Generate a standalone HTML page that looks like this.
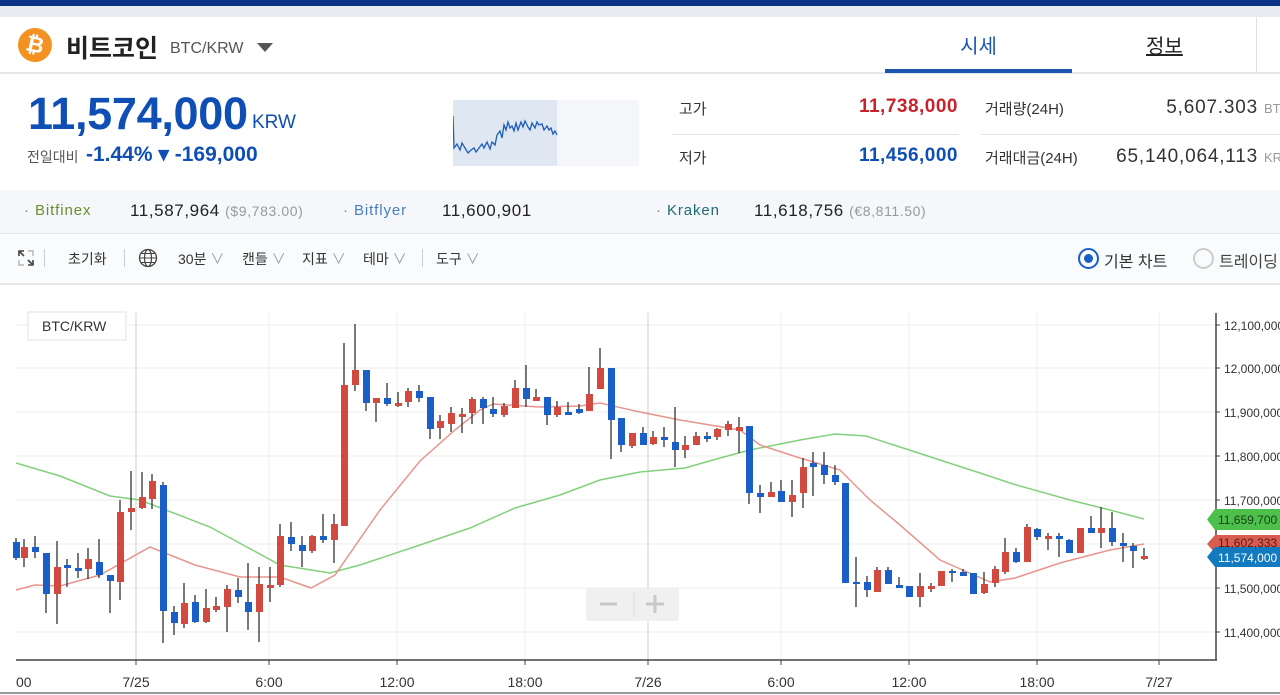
<!DOCTYPE html>
<html><head><meta charset="utf-8"><style>
*{margin:0;padding:0;box-sizing:border-box}
body{width:1280px;height:695px;overflow:hidden;background:#fff;font-family:"Liberation Sans","Noto Sans CJK KR",sans-serif;position:relative;color:#222}
.a{position:absolute;white-space:nowrap}
</style></head><body>
<div class="a" style="left:0;top:0;width:1280px;height:6px;background:#0b3487"></div>
<div class="a" style="left:0;top:6px;width:1280px;height:11px;background:#e8ebf0"></div>
<div class="a" style="left:0;top:72px;width:1280px;height:2px;background:#e4e6ea"></div>
<div class="a" style="left:18px;top:28px;width:34px;height:34px;border-radius:50%;background:#f39222;color:#fff;font-weight:bold;font-size:22px;line-height:34px;text-align:center;transform:rotate(12deg)">₿</div>
<div class="a" style="left:66px;top:29px;font-size:25px;font-weight:bold;color:#222">비트코인</div>
<div class="a" style="left:170px;top:40px;font-size:16px;color:#555">BTC/KRW</div>
<div class="a" style="left:257px;top:43px;width:0;height:0;border-left:8px solid transparent;border-right:8px solid transparent;border-top:9px solid #555"></div>
<div class="a" style="left:885px;top:30px;width:187px;text-align:center;font-size:20px;color:#1a55b0">시세</div>
<div class="a" style="left:885px;top:69px;width:187px;height:4px;background:#1a55b0"></div>
<div class="a" style="left:1146px;top:30px;font-size:20px;color:#222;text-decoration:underline">정보</div>
<div class="a" style="left:1256px;top:17px;width:1px;height:55px;background:#e0e0e0"></div>
<div class="a" style="left:28px;top:88px;font-size:45px;font-weight:bold;color:#0f4fb5;letter-spacing:-0.3px">11,574,000</div>
<div class="a" style="left:252px;top:112px;font-size:19px;color:#0f4fb5">KRW</div>
<div class="a" style="left:27px;top:147px;font-size:14px;color:#555">전일대비</div>
<div class="a" style="left:86px;top:142px;font-size:21px;font-weight:bold;color:#0f4fb5">-1.44% ▾ -169,000</div>
<div class="a" style="left:453px;top:100px;width:186px;height:66px;background:#f4f6fa"></div>
<svg class="a" style="left:453px;top:100px" width="186" height="66"><rect width="104" height="66" fill="#dfe7f3"/><polyline fill="none" stroke="#1d5cb8" stroke-width="1.3" points="0,16 1,48 4,44 7,50 9,43 12,48 15,53 18,50 21,48 23,52 26,48 29,44 31,48 34,42 37,49 39,42 42,45 44,35 47,31 49,38 51,25 53,30 55,22 57,28 59,26 61,31 63,23 65,30 68,22 70,27 72,21 75,27 77,30 79,23 82,28 84,22 86,25 89,24 91,30 94,26 96,30 98,28 100,34 102,31 104,35"/></svg>
<div class="a" style="left:679px;top:98px;font-size:15px;color:#333">고가</div>
<div class="a" style="left:780px;top:96px;width:178px;text-align:right;font-size:19px;font-weight:bold;color:#c8232c;letter-spacing:.5px">11,738,000</div>
<div class="a" style="left:672px;top:134px;width:287px;height:1px;background:#e5e5e5"></div>
<div class="a" style="left:679px;top:147px;font-size:15px;color:#333">저가</div>
<div class="a" style="left:780px;top:145px;width:178px;text-align:right;font-size:19px;font-weight:bold;color:#0f4fb5;letter-spacing:.5px">11,456,000</div>
<div class="a" style="left:985px;top:98px;font-size:15px;color:#333">거래량(24H)</div>
<div class="a" style="left:1100px;top:97px;width:158px;text-align:right;font-size:19px;color:#333;letter-spacing:.8px">5,607.303</div>
<div class="a" style="left:1264px;top:101px;font-size:13px;color:#999">BTC</div>
<div class="a" style="left:981px;top:134px;width:299px;height:1px;background:#e5e5e5"></div>
<div class="a" style="left:985px;top:147px;font-size:15px;color:#333">거래대금(24H)</div>
<div class="a" style="left:1100px;top:146px;width:158px;text-align:right;font-size:19px;color:#333;letter-spacing:.8px">65,140,064,113</div>
<div class="a" style="left:1264px;top:150px;font-size:13px;color:#999">KRW</div>
<div class="a" style="left:0;top:190px;width:1280px;height:44px;background:#f5f7fa;border-bottom:1px solid #e3e6ea"></div>
<div class="a" style="left:24px;top:202px;font-size:15px;color:#6a8f2c;letter-spacing:.9px"><span style="color:#888">·</span> Bitfinex</div>
<div class="a" style="left:130px;top:201px;font-size:17px;color:#222;letter-spacing:.6px">11,587,964 <span style="font-size:14px;color:#999">($9,783.00)</span></div>
<div class="a" style="left:343px;top:202px;font-size:15px;color:#4a7fbd;letter-spacing:.9px"><span style="color:#888">·</span> Bitflyer</div>
<div class="a" style="left:442px;top:201px;font-size:17px;color:#222;letter-spacing:.6px">11,600,901</div>
<div class="a" style="left:656px;top:202px;font-size:15px;color:#1f6b73;letter-spacing:.9px"><span style="color:#888">·</span> Kraken</div>
<div class="a" style="left:754px;top:201px;font-size:17px;color:#222;letter-spacing:.6px">11,618,756 <span style="font-size:14px;color:#999">(€8,811.50)</span></div>
<div class="a" style="left:0;top:235px;width:1280px;height:50px;background:#fafbfc;border-bottom:2px solid #e6e8eb"></div>
<svg class="a" style="left:18px;top:250px" width="16" height="16"><path d="M1 6V1h5M10 15h5v-5M1 1l5 5M15 15l-5-5" stroke="#444" stroke-width="1.6" fill="none"/><path d="M10 1h5v5M1 10v5h5" stroke="#999" fill="none"/></svg>
<div class="a" style="left:44px;top:249px;width:1px;height:18px;background:#ccc"></div>
<div class="a" style="left:68px;top:249px;font-size:14px;color:#333">초기화</div>
<div class="a" style="left:124px;top:249px;width:1px;height:18px;background:#ccc"></div>
<svg class="a" style="left:138px;top:248px" width="20" height="20"><circle cx="10" cy="10" r="8.5" fill="none" stroke="#444" stroke-width="1.3"/><ellipse cx="10" cy="10" rx="3.5" ry="8.5" fill="none" stroke="#444" stroke-width="1.2"/><path d="M1.5 10h17M3 5.5h14M3 14.5h14" stroke="#444" stroke-width="1.1"/></svg>
<div class="a" style="left:178px;top:249px;font-size:14px;color:#333">30분<span style="color:#999"> ∨</span></div>
<div class="a" style="left:242px;top:249px;font-size:14px;color:#333">캔들<span style="color:#999"> ∨</span></div>
<div class="a" style="left:302px;top:249px;font-size:14px;color:#333">지표<span style="color:#999"> ∨</span></div>
<div class="a" style="left:363px;top:249px;font-size:14px;color:#333">테마<span style="color:#999"> ∨</span></div>
<div class="a" style="left:422px;top:249px;width:1px;height:18px;background:#ccc"></div>
<div class="a" style="left:436px;top:249px;font-size:14px;color:#333">도구<span style="color:#999"> ∨</span></div>
<div class="a" style="left:1078px;top:248px;width:21px;height:21px;border-radius:50%;border:2px solid #1a5fc8"></div>
<div class="a" style="left:1084px;top:254px;width:9px;height:9px;border-radius:50%;background:#1a5fc8"></div>
<div class="a" style="left:1104px;top:248px;font-size:16px;color:#333">기본 차트</div>
<div class="a" style="left:1193px;top:248px;width:21px;height:21px;border-radius:50%;border:2px solid #ccc"></div>
<div class="a" style="left:1219px;top:248px;font-size:16px;color:#444">트레이딩</div>
<svg class="a" style="left:0;top:0" width="1280" height="695">
<g stroke="#ededed" stroke-width="1">
<path d="M16 325H1216M16 368H1216M16 412H1216M16 456H1216M16 500H1216M16 544H1216M16 588H1216M16 632H1216"/>
<path d="M269 313V660M397 313V660M525 313V660M781 313V660M909 313V660M1037 313V660M1159 313V660"/>
</g>
<path d="M136 313V660M648 313V660" stroke="#cfcfcf"/>
<path d="M16 660H1217M1216 313V660" stroke="#444" stroke-width="1.5"/>
<g stroke="#444"><path d="M136 660v5M269 660v5M397 660v5M525 660v5M648 660v5M781 660v5M909 660v5M1037 660v5M1159 660v5M1216 325h4M1216 368h4M1216 412h4M1216 456h4M1216 500h4M1216 544h4M1216 588h4M1216 632h4"/></g>
<g font-size="14" fill="#333" font-family="Liberation Sans, sans-serif">
<text x="16" y="687">00</text><text x="136" y="687" text-anchor="middle">7/25</text><text x="269" y="687" text-anchor="middle">6:00</text><text x="397" y="687" text-anchor="middle">12:00</text><text x="525" y="687" text-anchor="middle">18:00</text><text x="648" y="687" text-anchor="middle">7/26</text><text x="781" y="687" text-anchor="middle">6:00</text><text x="909" y="687" text-anchor="middle">12:00</text><text x="1037" y="687" text-anchor="middle">18:00</text><text x="1159" y="687" text-anchor="middle">7/27</text>
</g>
<g font-size="12" fill="#333" font-family="Liberation Sans, sans-serif">
<text x="1224" y="330">12,100,000</text><text x="1224" y="373">12,000,000</text><text x="1224" y="417">11,900,000</text><text x="1224" y="461">11,800,000</text><text x="1224" y="505">11,700,000</text><text x="1224" y="593">11,500,000</text><text x="1224" y="637">11,400,000</text>
</g>
<rect x="28" y="312" width="98" height="28" fill="#fff" stroke="#e0e0e0"/>
<text x="42" y="331" font-size="14" fill="#333" font-family="Liberation Sans, sans-serif">BTC/KRW</text>
<rect x="586" y="588" width="93" height="33" rx="3" fill="#f0f0f0"/>
<path d="M600 604h17" stroke="#c8c8c8" stroke-width="3"/><path d="M646 604h18M655 595v18" stroke="#c8c8c8" stroke-width="3"/><path d="M634 592v25" stroke="#ddd"/>
<polyline fill="none" stroke="#82d17a" stroke-width="1.5" points="16,463 60,476 110,496 140,500 210,527 280,565 330,573 360,565 420,545 470,528 515,508 560,495 600,480 640,472 685,468 720,458 750,450 800,440 835,434 866,436 900,447 940,460 980,473 1013,484 1070,500 1110,510 1144,519"/>
<polyline fill="none" stroke="#e7958d" stroke-width="1.5" points="16,590 35,585 60,586 100,575 150,547 195,565 240,577 280,577 311,588 335,575 380,510 420,461 455,430 480,410 493,404 540,407 580,406 600,403 640,412 680,420 740,430 760,445 800,458 840,470 870,500 900,525 940,560 990,582 1015,578 1060,563 1110,550 1144,544"/>
<g stroke="#333" stroke-width="1.3">
<path d="M16 538V560M24 539V567M35 536V558M46 553V613M57 541V624M67 559V587M78 553V578M88 548V579M99 539V578M110 575V613M120 500V600M131 471V530M142 472V509M152 474V509M163 482V643M174 606V635M184 583V628M195 595V623M206 589V623M216 597V612M227 585V632M238 578V603M248 563V630M259 567V642M270 567V602M280 524V587M291 522V551M302 536V567M312 535V553M323 514V543M334 514V563M344 343V526M355 324V391M366 370V411M376 398V422M387 383V406M398 392V407M408 388V407M419 385V402M430 397V439M440 415V439M451 407V432M462 408V433M472 397V424M483 397V424M493 397V417M504 403V417M515 380V408M526 365V407M536 389V401M547 397V425M557 401V417M568 402V415M579 404V414M589 367V411M600 348V389M611 368V459M621 418V452M632 433V448M643 427V445M653 431V445M664 427V447M675 407V467M685 436V458M696 432V445M707 432V442M717 428V440M728 421V436M739 417V453M749 426V504M760 485V513M771 482V497M781 480V502M792 480V517M803 458V508M813 452V496M824 452V484M835 465V485M845 483V583M856 557V607M867 576V597M877 567V592M888 567V584M899 577V588M909 586V597M920 573V607M931 583V592M941 571V586M952 569V582M963 569V576M973 573V594M984 572V594M995 566V587M1005 538V574M1016 548V563M1027 524V562M1037 528V540M1048 533V550M1059 533V557M1069 539V553M1080 528V553M1091 516V533M1101 507V548M1112 512V546M1123 533V562M1133 543V568M1144 548V560"/>
</g>
<g fill="#d2493f">
<rect x="21" y="547" width="7" height="11"/><rect x="54" y="567" width="7" height="27"/><rect x="85" y="559" width="7" height="10"/><rect x="117" y="512" width="7" height="70"/><rect x="128" y="508" width="7" height="4"/><rect x="139" y="497" width="7" height="11"/><rect x="149" y="481" width="7" height="18"/><rect x="181" y="603" width="7" height="21"/><rect x="203" y="608" width="7" height="14"/><rect x="213" y="606" width="7" height="4"/><rect x="224" y="589" width="7" height="18"/><rect x="256" y="584" width="7" height="28"/><rect x="267" y="585" width="7" height="3"/><rect x="277" y="536" width="7" height="49"/><rect x="309" y="536" width="7" height="15"/><rect x="331" y="524" width="7" height="16"/><rect x="341" y="385" width="7" height="141"/><rect x="352" y="370" width="7" height="15"/><rect x="373" y="398" width="7" height="5"/><rect x="395" y="403" width="7" height="3"/><rect x="405" y="391" width="7" height="11"/><rect x="437" y="421" width="7" height="7"/><rect x="448" y="413" width="7" height="11"/><rect x="459" y="414" width="7" height="3"/><rect x="469" y="399" width="7" height="14"/><rect x="501" y="406" width="7" height="9"/><rect x="512" y="388" width="7" height="20"/><rect x="533" y="397" width="7" height="4"/><rect x="554" y="407" width="7" height="8"/><rect x="586" y="394" width="7" height="17"/><rect x="597" y="368" width="7" height="21"/><rect x="629" y="433" width="7" height="13"/><rect x="650" y="437" width="7" height="7"/><rect x="682" y="445" width="7" height="5"/><rect x="693" y="436" width="7" height="9"/><rect x="714" y="429" width="7" height="8"/><rect x="725" y="424" width="7" height="6"/><rect x="736" y="427" width="7" height="4"/><rect x="768" y="492" width="7" height="5"/><rect x="789" y="495" width="7" height="7"/><rect x="800" y="467" width="7" height="26"/><rect x="874" y="570" width="7" height="22"/><rect x="917" y="586" width="7" height="11"/><rect x="928" y="586" width="7" height="3"/><rect x="938" y="571" width="7" height="15"/><rect x="981" y="584" width="7" height="9"/><rect x="992" y="569" width="7" height="14"/><rect x="1002" y="552" width="7" height="20"/><rect x="1024" y="527" width="7" height="35"/><rect x="1045" y="536" width="7" height="3"/><rect x="1077" y="528" width="7" height="25"/><rect x="1098" y="528" width="7" height="5"/><rect x="1141" y="556" width="7" height="3"/>
</g>
<g fill="#1a5fc8">
<rect x="13" y="542" width="7" height="16"/><rect x="32" y="547" width="7" height="5"/><rect x="43" y="553" width="7" height="41"/><rect x="64" y="565" width="7" height="3"/><rect x="75" y="568" width="7" height="3"/><rect x="96" y="562" width="7" height="13"/><rect x="107" y="575" width="7" height="6"/><rect x="160" y="485" width="7" height="126"/><rect x="171" y="612" width="7" height="11"/><rect x="192" y="602" width="7" height="20"/><rect x="235" y="590" width="7" height="7"/><rect x="245" y="602" width="7" height="10"/><rect x="288" y="537" width="7" height="7"/><rect x="299" y="545" width="7" height="6"/><rect x="320" y="536" width="7" height="4"/><rect x="363" y="370" width="7" height="33"/><rect x="384" y="398" width="7" height="6"/><rect x="416" y="391" width="7" height="7"/><rect x="427" y="397" width="7" height="32"/><rect x="480" y="399" width="7" height="9"/><rect x="490" y="409" width="7" height="5"/><rect x="523" y="388" width="7" height="11"/><rect x="544" y="397" width="7" height="18"/><rect x="565" y="412" width="7" height="3"/><rect x="576" y="409" width="7" height="4"/><rect x="608" y="368" width="7" height="52"/><rect x="618" y="418" width="7" height="27"/><rect x="640" y="433" width="7" height="12"/><rect x="661" y="437" width="7" height="3"/><rect x="672" y="442" width="7" height="8"/><rect x="704" y="436" width="7" height="3"/><rect x="746" y="426" width="7" height="67"/><rect x="757" y="493" width="7" height="4"/><rect x="778" y="491" width="7" height="11"/><rect x="810" y="463" width="7" height="4"/><rect x="821" y="465" width="7" height="10"/><rect x="832" y="475" width="7" height="7"/><rect x="842" y="483" width="7" height="100"/><rect x="853" y="582" width="7" height="2"/><rect x="864" y="582" width="7" height="8"/><rect x="885" y="570" width="7" height="14"/><rect x="896" y="585" width="7" height="3"/><rect x="906" y="586" width="7" height="11"/><rect x="949" y="571" width="7" height="2"/><rect x="960" y="572" width="7" height="4"/><rect x="970" y="573" width="7" height="21"/><rect x="1013" y="552" width="7" height="10"/><rect x="1034" y="529" width="7" height="8"/><rect x="1056" y="536" width="7" height="3"/><rect x="1066" y="540" width="7" height="13"/><rect x="1088" y="528" width="7" height="5"/><rect x="1109" y="528" width="7" height="14"/><rect x="1120" y="543" width="7" height="3"/><rect x="1130" y="546" width="7" height="5"/>
</g>
<path d="M1207 519.5L1215 509H1280V530H1215Z" fill="#4cc04a"/>
<path d="M1207 544L1215 535H1280V553H1215Z" fill="#d95c50"/>
<path d="M1207 557L1215 547H1280V567H1215Z" fill="#127abf"/>
<g font-size="12" font-family="Liberation Sans, sans-serif"><text x="1218" y="524" fill="#1a3d1a">11,659,700</text><text x="1218" y="547" fill="#5a1a16">11,602,333</text><text x="1218" y="562" fill="#fff">11,574,000</text></g>
<path d="M0 693H1280" stroke="#999" stroke-width="2"/>
</svg>
</body></html>
